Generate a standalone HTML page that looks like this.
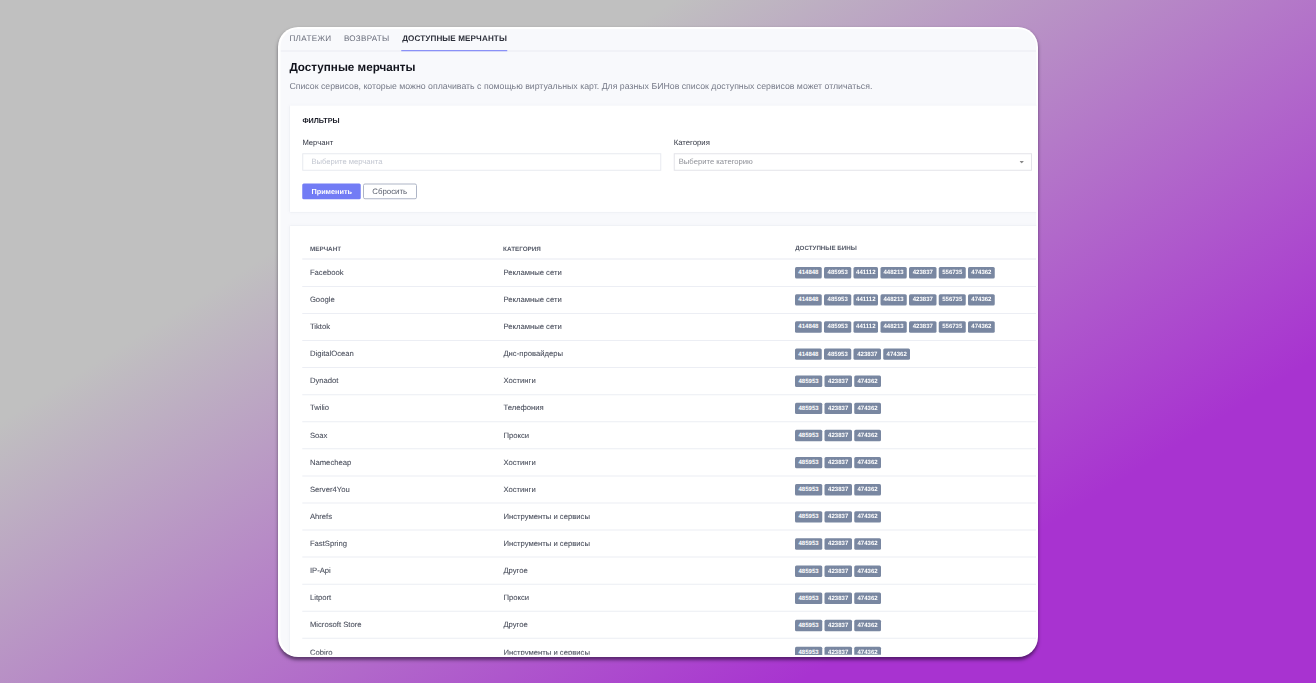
<!DOCTYPE html>
<html lang="ru"><head><meta charset="utf-8"><title>Доступные мерчанты</title>
<style>
html,body{margin:0;padding:0}
body{width:1316px;height:683px;overflow:hidden;position:relative;
 background:linear-gradient(148deg,#c0c0c0 28%,#a833d0 78.5%);
 font-family:"Liberation Sans",sans-serif;color:#6b7280}
.frame{position:absolute;left:278px;top:27px;width:760px;height:630px;border-radius:20px;background:#fff;
 box-shadow:0 2.5px 3.5px rgba(10,0,20,.5);overflow:hidden}
.scaler{position:absolute;left:0;top:0;width:3040px;height:2520px;transform:scale(0.25);transform-origin:0 0}

.page{position:absolute;left:-1112px;top:-108px;width:5264px;height:2732px;text-rendering:geometricPrecision}
.inner{position:absolute;left:1122.4px;top:116px;width:3022.4px;height:2502.8px;background:#f8f9fc;border-radius:70px;overflow:hidden}
.shift{position:absolute;left:-1122.4px;top:-116px;width:5264px;height:2732px}
.abs{position:absolute;white-space:nowrap;line-height:1;margin:0}
.tabline{position:absolute;left:1122.4px;width:3022.4px;top:202.4px;height:4px;background:#e9ebf1}
.tab{font-size:32.4px;color:#676b79;top:135.8px}
.tab.active{font-weight:bold;color:#2c2f3a}
.uline{position:absolute;left:1604.8px;width:424px;top:200.4px;height:4.6px;background:#8a91f7}
h1{font-size:46.68px;font-weight:bold;color:#11131c;left:1157.6px;top:242.8px}
.desc{font-size:35px;color:#767a88;left:1157.6px;top:326px}
.card{position:absolute;background:#fff;box-shadow:0 0 8px rgba(200,205,220,.5)}
.ftitle{font-size:28.92px;font-weight:bold;color:#1b1d28;left:1209.6px;top:470.4px}
.label{font-size:30.6px;color:#343845;top:554.8px}
.input{position:absolute;box-sizing:border-box;border:4px solid #e8eaf0;background:#fff;top:612.8px;height:70px}
.ph{font-size:30.52px;top:630.4px}
.caret{position:absolute;left:4078.4px;top:643.6px;width:17.6px;height:10.4px}
.btn{position:absolute;box-sizing:border-box;top:733.6px;height:63.6px}
.btn1{left:1208.8px;width:234.4px;background:#727cf5;border-radius:6px}
.btn2{left:1451.6px;width:216px;background:#fff;border:4px solid #aeb5c6;border-radius:8px}
.bt{font-size:29.28px;top:750px}
.th{font-size:25.2px;font-weight:bold;color:#555a68;top:982.4px}
.hl{position:absolute;left:1208.8px;width:2936px;height:4px;background:#eceef4}
.td{font-size:30.72px;color:#4a4f5d;-webkit-text-stroke:0.32px #4a4f5d}
.badge{position:absolute;height:45.6px;background:#7987a1;border-radius:6px;color:#fff;font-size:24.2px;font-weight:bold;
 line-height:42.4px;text-align:center;white-space:nowrap}
</style></head>
<body>
<div class="frame"><div class="scaler">
<div class="page">
<div class="inner"><div class="shift">
<nav>
<div class="tabline"></div><div class="uline"></div>
<a class="abs tab" style="left:1157.6px;letter-spacing:1.48px">ПЛАТЕЖИ</a>
<a class="abs tab" style="left:1375.6px;letter-spacing:1.04px">ВОЗВРАТЫ</a>
<a class="abs tab active" style="left:1608.8px;letter-spacing:0.44px">ДОСТУПНЫЕ МЕРЧАНТЫ</a>
</nav>
<h1 class="abs">Доступные мерчанты</h1>
<p class="abs desc">Список сервисов, которые можно оплачивать с помощью виртуальных карт. Для разных БИНов список доступных сервисов может отличаться.</p>
<section>
<div class="card" style="left:1160px;top:422px;width:3040px;height:425.2px"></div>
<div class="abs ftitle">ФИЛЬТРЫ</div>
<label class="abs label" style="left:1209.6px">Мерчант</label>
<label class="abs label" style="left:2694.8px;font-size:30.96px">Категория</label>
<div class="input" style="left:1208.8px;width:1436px"></div>
<div class="input" style="left:2694.8px;width:1432.8px;border-color:#e3e4e9"></div>
<span class="abs ph" style="left:1245.6px;color:#c3c7d1">Выберите мерчанта</span>
<span class="abs ph" style="left:2714.8px;color:#8e9097;font-size:30.72px;top:631.6px">Выберите категорию</span>
<svg class="caret" viewBox="0 0 44 26" preserveAspectRatio="none"><path d="M0 0H44L22 26Z" fill="#888"/></svg>
<div class="btn btn1"></div><div class="btn btn2"></div>
<span class="abs bt" style="left:1245.6px;color:#fff;font-weight:bold">Применить</span>
<span class="abs bt" style="left:1489.2px;color:#5a5f6d;font-size:31.4px;top:748.8px">Сбросить</span>
</section>
<section>
<div class="card" style="left:1160px;top:904px;width:3040px;height:1840px"></div>
<div class="abs th" style="left:1239.6px;font-size:25.36px">МЕРЧАНТ</div>
<div class="abs th" style="left:2012.4px">КАТЕГОРИЯ</div>
<div class="abs th" style="left:3180.8px;font-size:24.8px">ДОСТУПНЫЕ БИНЫ</div>
<div class="hl" style="top:1032.8px;height:6px;background:#eff1f6"></div>
<div class="hl" style="top:1143.6px"></div>
<div class="abs td" style="left:1239.6px;top:1073.6px">Facebook</div>
<div class="abs td" style="left:2013.6px;top:1073.6px">Рекламные сети</div>
<span class="badge" style="left:3180px;top:1068.2px;width:107.2px">414848</span>
<span class="badge" style="left:3296.4px;top:1068.2px;width:108.8px">485953</span>
<span class="badge" style="left:3414.4px;top:1068.2px;width:98px">441112</span>
<span class="badge" style="left:3521.6px;top:1068.2px;width:105.6px">448213</span>
<span class="badge" style="left:3636.4px;top:1068.2px;width:109.6px">423837</span>
<span class="badge" style="left:3755.2px;top:1068.2px;width:107.6px">556735</span>
<span class="badge" style="left:3872px;top:1068.2px;width:107.2px">474362</span>
<div class="hl" style="top:1251.88px"></div>
<div class="abs td" style="left:1239.6px;top:1182.12px">Google</div>
<div class="abs td" style="left:2013.6px;top:1182.12px">Рекламные сети</div>
<span class="badge" style="left:3180px;top:1176.72px;width:107.2px">414848</span>
<span class="badge" style="left:3296.4px;top:1176.72px;width:108.8px">485953</span>
<span class="badge" style="left:3414.4px;top:1176.72px;width:98px">441112</span>
<span class="badge" style="left:3521.6px;top:1176.72px;width:105.6px">448213</span>
<span class="badge" style="left:3636.4px;top:1176.72px;width:109.6px">423837</span>
<span class="badge" style="left:3755.2px;top:1176.72px;width:107.6px">556735</span>
<span class="badge" style="left:3872px;top:1176.72px;width:107.2px">474362</span>
<div class="hl" style="top:1360.16px"></div>
<div class="abs td" style="left:1239.6px;top:1290.64px">Tiktok</div>
<div class="abs td" style="left:2013.6px;top:1290.64px">Рекламные сети</div>
<span class="badge" style="left:3180px;top:1285.24px;width:107.2px">414848</span>
<span class="badge" style="left:3296.4px;top:1285.24px;width:108.8px">485953</span>
<span class="badge" style="left:3414.4px;top:1285.24px;width:98px">441112</span>
<span class="badge" style="left:3521.6px;top:1285.24px;width:105.6px">448213</span>
<span class="badge" style="left:3636.4px;top:1285.24px;width:109.6px">423837</span>
<span class="badge" style="left:3755.2px;top:1285.24px;width:107.6px">556735</span>
<span class="badge" style="left:3872px;top:1285.24px;width:107.2px">474362</span>
<div class="hl" style="top:1468.44px"></div>
<div class="abs td" style="left:1239.6px;top:1399.16px">DigitalOcean</div>
<div class="abs td" style="left:2013.6px;top:1399.16px">Днс-провайдеры</div>
<span class="badge" style="left:3180px;top:1393.76px;width:107.2px">414848</span>
<span class="badge" style="left:3296.4px;top:1393.76px;width:108.8px">485953</span>
<span class="badge" style="left:3414.4px;top:1393.76px;width:109.6px">423837</span>
<span class="badge" style="left:3533.2px;top:1393.76px;width:107.2px">474362</span>
<div class="hl" style="top:1576.72px"></div>
<div class="abs td" style="left:1239.6px;top:1507.68px">Dynadot</div>
<div class="abs td" style="left:2013.6px;top:1507.68px">Хостинги</div>
<span class="badge" style="left:3180px;top:1502.28px;width:108.8px">485953</span>
<span class="badge" style="left:3298px;top:1502.28px;width:109.6px">423837</span>
<span class="badge" style="left:3416.8px;top:1502.28px;width:107.2px">474362</span>
<div class="hl" style="top:1685px"></div>
<div class="abs td" style="left:1239.6px;top:1616.2px">Twilio</div>
<div class="abs td" style="left:2013.6px;top:1616.2px">Телефония</div>
<span class="badge" style="left:3180px;top:1610.8px;width:108.8px">485953</span>
<span class="badge" style="left:3298px;top:1610.8px;width:109.6px">423837</span>
<span class="badge" style="left:3416.8px;top:1610.8px;width:107.2px">474362</span>
<div class="hl" style="top:1793.28px"></div>
<div class="abs td" style="left:1239.6px;top:1724.72px">Soax</div>
<div class="abs td" style="left:2013.6px;top:1724.72px">Прокси</div>
<span class="badge" style="left:3180px;top:1719.32px;width:108.8px">485953</span>
<span class="badge" style="left:3298px;top:1719.32px;width:109.6px">423837</span>
<span class="badge" style="left:3416.8px;top:1719.32px;width:107.2px">474362</span>
<div class="hl" style="top:1901.56px"></div>
<div class="abs td" style="left:1239.6px;top:1833.24px">Namecheap</div>
<div class="abs td" style="left:2013.6px;top:1833.24px">Хостинги</div>
<span class="badge" style="left:3180px;top:1827.84px;width:108.8px">485953</span>
<span class="badge" style="left:3298px;top:1827.84px;width:109.6px">423837</span>
<span class="badge" style="left:3416.8px;top:1827.84px;width:107.2px">474362</span>
<div class="hl" style="top:2009.84px"></div>
<div class="abs td" style="left:1239.6px;top:1941.76px">Server4You</div>
<div class="abs td" style="left:2013.6px;top:1941.76px">Хостинги</div>
<span class="badge" style="left:3180px;top:1936.36px;width:108.8px">485953</span>
<span class="badge" style="left:3298px;top:1936.36px;width:109.6px">423837</span>
<span class="badge" style="left:3416.8px;top:1936.36px;width:107.2px">474362</span>
<div class="hl" style="top:2118.12px"></div>
<div class="abs td" style="left:1239.6px;top:2050.28px">Ahrefs</div>
<div class="abs td" style="left:2013.6px;top:2050.28px">Инструменты и сервисы</div>
<span class="badge" style="left:3180px;top:2044.88px;width:108.8px">485953</span>
<span class="badge" style="left:3298px;top:2044.88px;width:109.6px">423837</span>
<span class="badge" style="left:3416.8px;top:2044.88px;width:107.2px">474362</span>
<div class="hl" style="top:2226.4px"></div>
<div class="abs td" style="left:1239.6px;top:2158.8px">FastSpring</div>
<div class="abs td" style="left:2013.6px;top:2158.8px">Инструменты и сервисы</div>
<span class="badge" style="left:3180px;top:2153.4px;width:108.8px">485953</span>
<span class="badge" style="left:3298px;top:2153.4px;width:109.6px">423837</span>
<span class="badge" style="left:3416.8px;top:2153.4px;width:107.2px">474362</span>
<div class="hl" style="top:2334.68px"></div>
<div class="abs td" style="left:1239.6px;top:2267.32px">IP-Api</div>
<div class="abs td" style="left:2013.6px;top:2267.32px">Другое</div>
<span class="badge" style="left:3180px;top:2261.92px;width:108.8px">485953</span>
<span class="badge" style="left:3298px;top:2261.92px;width:109.6px">423837</span>
<span class="badge" style="left:3416.8px;top:2261.92px;width:107.2px">474362</span>
<div class="hl" style="top:2442.96px"></div>
<div class="abs td" style="left:1239.6px;top:2375.84px">Litport</div>
<div class="abs td" style="left:2013.6px;top:2375.84px">Прокси</div>
<span class="badge" style="left:3180px;top:2370.44px;width:108.8px">485953</span>
<span class="badge" style="left:3298px;top:2370.44px;width:109.6px">423837</span>
<span class="badge" style="left:3416.8px;top:2370.44px;width:107.2px">474362</span>
<div class="hl" style="top:2551.24px"></div>
<div class="abs td" style="left:1239.6px;top:2484.36px">Microsoft Store</div>
<div class="abs td" style="left:2013.6px;top:2484.36px">Другое</div>
<span class="badge" style="left:3180px;top:2478.96px;width:108.8px">485953</span>
<span class="badge" style="left:3298px;top:2478.96px;width:109.6px">423837</span>
<span class="badge" style="left:3416.8px;top:2478.96px;width:107.2px">474362</span>
<div class="abs td" style="left:1239.6px;top:2592.88px">Cobiro</div>
<div class="abs td" style="left:2013.6px;top:2592.88px">Инструменты и сервисы</div>
<span class="badge" style="left:3180px;top:2587.48px;width:108.8px">485953</span>
<span class="badge" style="left:3298px;top:2587.48px;width:109.6px">423837</span>
<span class="badge" style="left:3416.8px;top:2587.48px;width:107.2px">474362</span>
</section>
</div></div></div>
</div></div>
</body></html>
